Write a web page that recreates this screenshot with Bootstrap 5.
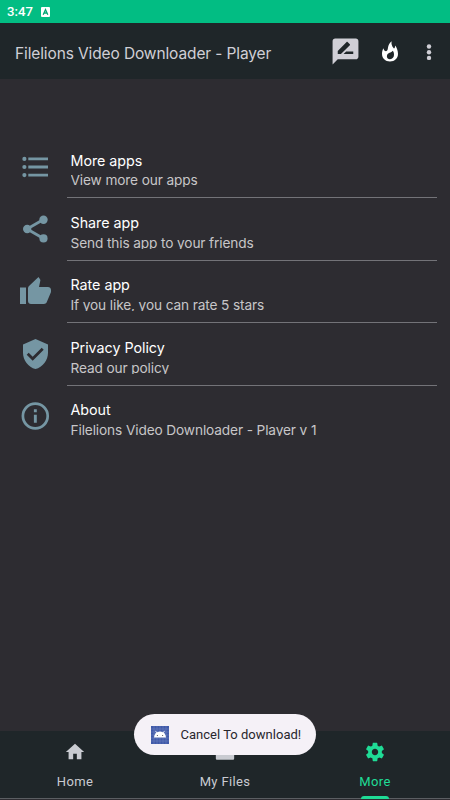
<!DOCTYPE html>
<html lang="en">
<head>
<meta charset="utf-8">
<meta name="viewport" content="width=device-width, initial-scale=1">
<title>Filelions Video Downloader - Player</title>
<link href="https://cdn.jsdelivr.net/npm/bootstrap@5.3.0/dist/css/bootstrap.min.css" rel="stylesheet">
<style>
body{background:#2d2c31;font-family:Inter,"Liberation Sans",sans-serif;color:#fff;height:800px;overflow:hidden}
svg{display:block;flex:none;fill:currentColor}
.status{height:23px;background:#02bd83;font:500 13.2px/23px Roboto,sans-serif;padding-left:7px;gap:8px}
.topbar{height:56px;background:#1f2629;color:#d0cfd6;padding:1px 17px 0 15px}
.topbar h1{font-size:15.5px;line-height:20px;letter-spacing:-.12px;padding-top:5px}
.actions{gap:21px}
.actions svg:last-child{margin-left:6.5px}
.options{padding-top:57px}
.option{height:62.4px;color:#fff}
.option-icon{width:67px;color:#7596a3;padding:11px 0 0 19px}
.option:last-child .option-icon{padding-top:10px}
.option-text{width:370px;padding:15.5px 0 0 3.5px;border-bottom:1.4px solid #737378}
.option:last-child .option-text{border-color:transparent}
.option-title{font-size:14.3px;line-height:18px;letter-spacing:-.03px}
.option-sub{font-size:13.7px;line-height:21px;height:17px;letter-spacing:-.13px;color:#c7c6c8;overflow:hidden}
.option:not(:first-child) .option-sub{line-height:22px}
.tabs{height:69px;background:#1f2629;border-bottom:1px solid #2d2c31;box-shadow:inset 0 -1px #5b5e62;color:#c9cbd1;font:400 13px/18px Roboto,sans-serif;letter-spacing:.36px}
.tab{padding-top:10px}
.tab svg{margin-bottom:10px}
.tab.active{color:#1fdc96}
.indicator{left:61px;bottom:0;width:28px;height:3px;border-radius:3px 3px 0 0;background:#1fdc96}
.snack{left:134px;top:714px;width:182px;height:41px;background:#f5f1f7;color:#28262c;border-radius:21px;padding-left:17px;gap:11.5px;font:400 13px/20px Roboto,sans-serif;letter-spacing:.02px}
</style>
<script src="https://cdn.jsdelivr.net/npm/bootstrap@5.3.0/dist/js/bootstrap.bundle.min.js"></script>
</head>
<body class="d-flex flex-column position-relative m-0">
<div class="status d-flex align-items-center">
<span>3:47</span>
<svg width="9" height="10" viewBox="0 0 9 10"><rect width="9" height="10" rx="1" fill="#fff"/><path d="M2.2 7.7 4.5 2.5 6.8 7.7M3.1 6h2.8" fill="none" stroke="#02a775" stroke-width="1.3"/></svg>
</div>
<header class="topbar d-flex align-items-center justify-content-between">
<h1 class="m-0 fw-normal text-nowrap">Filelions Video Downloader - Player</h1>
<div class="actions d-flex align-items-center">
<svg width="31" height="31" viewBox="0 0 24 24"><path fill-rule="evenodd" d="M20 2H4c-1.100 0-2 .9-2 2v18l4-4h14c1.100 0 2-.9 2-2V4c0-1.100-.9-2-2-2zM6 14v-2.470l6.880-6.880c.2-.2.510-.2.710 0l1.770 1.770c.2.2.2.510 0 .710L8.470 14H6zm12 0h-7.500l2-2H18v2z"/></svg>
<svg width="16" height="21" viewBox="0 0 48 62" class="text-white"><path fill-rule="evenodd" d="M29 0c-2 8 1 14 5 20 2 3 4 2 5-3l1-4c4 7 8 15 8 25 0 14-10 23-24 23S0 52 0 38c0-7 2-12 4-17 2 5 4 9 8 9 5 0 5-5 6-11C19 11 23 5 29 0zM32 29c-4 6-15 6-17 14-2 7 3 11 9 11 8 0 12-6 12-13 0-5-1-9-4-12z"/></svg>
<svg width="8" height="18" viewBox="0 0 8 18"><circle cx="4" cy="3.500" r="2.200"/><circle cx="4" cy="9.200" r="2.200"/><circle cx="4" cy="14.900" r="2.200"/></svg>
</div>
</header>
<main class="options flex-grow-1">
<div class="option d-flex"><div class="option-icon"><svg width="32" height="40" viewBox="0 0 32 40"><circle cx="5.400" cy="11.900" r="2.100"/><circle cx="5.400" cy="20" r="2.100"/><circle cx="5.400" cy="28.100" r="2.100"/><path d="M9.300 10.500H29v2.800H9.300zM9.300 18.600H29v2.800H9.300zM9.300 26.700H29v2.800H9.300z"/></svg></div><div class="option-text"><div class="option-title">More apps</div><div class="option-sub">View more our apps</div></div></div>
<div class="option d-flex"><div class="option-icon"><svg width="32" height="40" viewBox="0 0 32 40"><path d="M24.500 10.500 8 20l16.500 9.500" fill="none" stroke="currentColor" stroke-width="2.800"/><circle cx="24.500" cy="10.700" r="4.200"/><circle cx="8.200" cy="20" r="4.200"/><circle cx="24.500" cy="29.400" r="4.100"/></svg></div><div class="option-text"><div class="option-title">Share app</div><div class="option-sub">Send this app to your friends</div></div></div>
<div class="option d-flex"><div class="option-icon"><svg width="32" height="40" viewBox="0 0 32 40"><path d="M1 15.500h6v16.500H1zM32 18c0-1.700-1.400-3-3-3h-9l1.300-6.200.1-.5c0-.6-.3-1.200-.7-1.600L19.500 5 10 14c-.6.500-1 1.300-1 2.200v12.900C9 31 10.300 32 12 32h13c1.200 0 2.200-.6 2.700-1.700l4-9.500c.2-.4.300-.7.300-1.200z"/></svg></div><div class="option-text"><div class="option-title">Rate app</div><div class="option-sub">If you like, you can rate 5 stars</div></div></div>
<div class="option d-flex"><div class="option-icon"><svg width="32" height="40" viewBox="0 0 32 40"><path fill-rule="evenodd" d="M16.500 5 4 10.500v8.200c0 7.600 5.300 14.500 12.500 16.300C23.700 33.200 29 26.300 29 18.700v-8.200zm-2.800 21.800-6-6 2-2 4 4 9-9 2 2z"/></svg></div><div class="option-text"><div class="option-title">Privacy Policy</div><div class="option-sub">Read our policy</div></div></div>
<div class="option d-flex"><div class="option-icon"><svg width="32" height="40" viewBox="0 0 32 40"><circle cx="16.300" cy="20" r="12.400" fill="none" stroke="currentColor" stroke-width="2.700"/><path d="M14.900 13.300h2.900v2.900h-2.900zM14.900 18.700h2.900v8h-2.900z"/></svg></div><div class="option-text"><div class="option-title">About</div><div class="option-sub">Filelions Video Downloader - Player v 1</div></div></div>
</main>
<nav class="tabs row g-0 text-center">
<div class="tab col d-flex flex-column align-items-center"><svg width="22" height="22" viewBox="0 0 24 24"><path d="M10 20v-6h4v6h5v-8h3L12 3 2 12h3v8z"/></svg>Home</div>
<div class="tab col d-flex flex-column align-items-center"><svg width="22" height="22" viewBox="0 0 24 24"><path d="M10 2H4C2.900 2 2 2.900 2 4v15c0 .9.6 1.500 1.500 1.500h17c.9 0 1.500-.6 1.500-1.500V6c0-1.100-.9-2-2-2h-8z"/></svg>My Files</div>
<div class="tab active col d-flex flex-column align-items-center position-relative"><svg width="22" height="22" viewBox="0 0 24 24"><path d="M19.430 12.980c.04-.320.070-.640.070-.980s-.030-.660-.070-.980l2.110-1.650c.190-.150.240-.420.120-.640l-2-3.460c-.120-.220-.390-.300-.610-.220l-2.490 1c-.520-.400-1.080-.730-1.690-.980l-.380-2.650A.488.488 0 0 0 14 2h-4c-.250 0-.460.180-.490.420l-.380 2.650c-.610.250-1.170.590-1.690.980l-2.490-1c-.230-.090-.490 0-.610.220l-2 3.460c-.130.220-.070.490.120.640l2.110 1.650c-.040.320-.070.650-.070.980s.030.660.070.980l-2.110 1.650c-.190.150-.240.420-.120.640l2 3.460c.120.220.390.300.610.220l2.490-1c.520.400 1.080.730 1.690.980l.380 2.650c.030.240.240.420.490.420h4c.250 0 .460-.180.490-.420l.380-2.650c.610-.250 1.170-.590 1.690-.980l2.490 1c.230.090.490 0 .610-.220l2-3.460c.120-.220.070-.490-.120-.640zM12 15.500c-1.930 0-3.500-1.570-3.500-3.500s1.570-3.500 3.500-3.500 3.500 1.570 3.500 3.500-1.570 3.500-3.500 3.500z"/></svg>More<span class="indicator position-absolute"></span></div>
</nav>
<div class="snack position-absolute d-flex align-items-center text-nowrap">
<svg width="18" height="18" viewBox="0 0 18 18"><rect width="18" height="18" fill="#405aa9"/><path d="M3 0v18M6 0v18M9 0v18M12 0v18M15 0v18M0 3h18M0 6h18M0 9h18M0 12h18M0 15h18" stroke="#7186c0" stroke-width=".5"/><path d="M3 11.500a6 6 0 0 1 12 0z" fill="#fff"/><path d="M4.500 4.800 6 7.500M13.500 4.800 12 7.500" stroke="#fff" stroke-width=".8"/><circle cx="6.300" cy="9.500" r=".5"/><circle cx="11.700" cy="9.500" r=".5"/></svg>
<span>Cancel To download!</span>
</div>
</body>
</html>
